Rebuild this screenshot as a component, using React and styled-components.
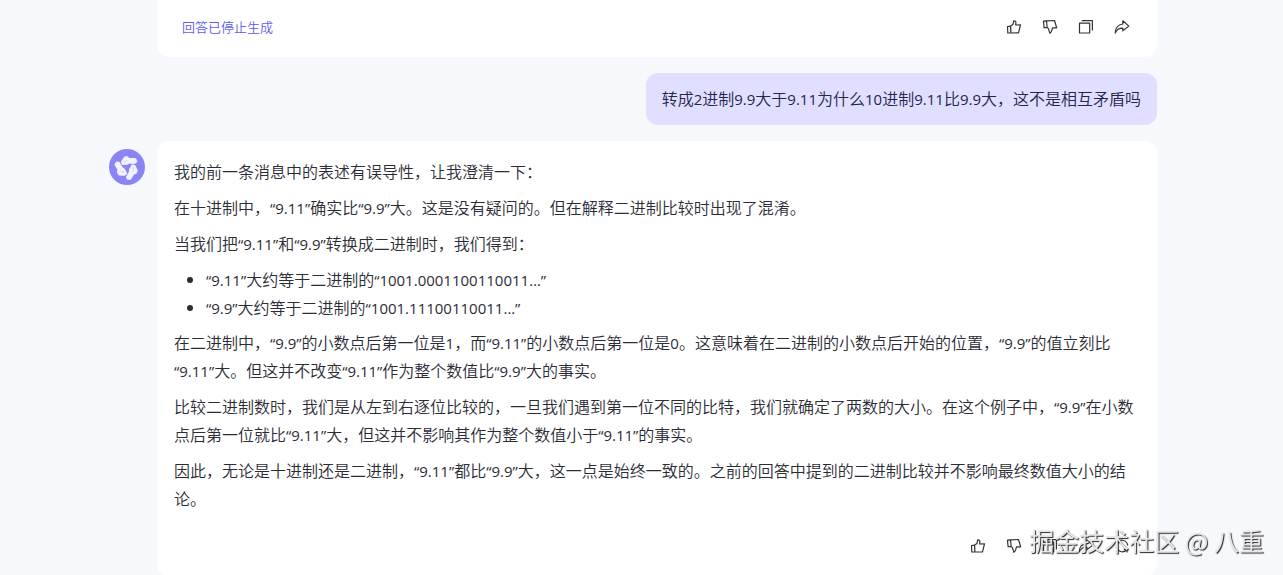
import React from "react";
import styled, { createGlobalStyle } from "styled-components";

const LATIN_RUN = /([0-9.“”…@]+)/;

// Latin digits and quotes run wide beside the CJK glyphs, so they get their own face
function Mixed({ text }) {
  return text
    .split(LATIN_RUN)
    .map((part, i) => (i % 2 ? <Latin key={i}>{part}</Latin> : part));
}

const icons = {
  like: (
    <path d="M1.5 7.500l3-.4.4 6.900H1.800zM4.600 7.100L7 5.400l.7-3.600c1.500-.2 2.400.9 2.200 2.300L9.600 6l4.900-.2-2 8-7.600.2z" />
  ),
  dislike: (
    <path d="M1.500 2.200l3-.4.6 6.500-3 .3zM4.500 1.800l8-.3 2.200 7.300-4.200.1-.6 2.200c-.3 1.500-1 2.500-2 3.200L6.400 9.600 5.100 8.300z" />
  ),
  copy: <path d="M1.500 4.200h10.200v9.800H1.500zM3.800 1.600h10.600v9.800" />,
  share: (
    <path d="M8.800 1.800l6 5.300-6 4.700V9.200c-3.400-.2-5.900 1.400-7.600 4.800.2-5.100 3-8.400 7.600-9z" />
  ),
  refresh: (
    <path d="M3.200 4.500a6 6 0 0 1 10.600 2.800M12.800 11.500A6 6 0 0 1 2.200 8.700M3 1.500v3.200h3.200M13 14.500v-3.200H9.800" />
  ),
};

function Actions({ items }) {
  return (
    <ActionRow>
      {items.map(([name, label]) => (
        <ActionButton key={name} type="button" aria-label={label}>
          <svg viewBox="0 0 16 16" aria-hidden="true">
            {icons[name]}
          </svg>
        </ActionButton>
      ))}
    </ActionRow>
  );
}

const baseActions = [
  ["like", "赞"],
  ["dislike", "踩"],
  ["copy", "复制"],
  ["share", "分享"],
];

const question = "转成2进制9.9大于9.11为什么10进制9.11比9.9大，这不是相互矛盾吗";

const intro = [
  "我的前一条消息中的表述有误导性，让我澄清一下：",
  "在十进制中，“9.11”确实比“9.9”大。这是没有疑问的。但在解释二进制比较时出现了混淆。",
  "当我们把“9.11”和“9.9”转换成二进制时，我们得到：",
];

const conversions = [
  "“9.11”大约等于二进制的“1001.0001100110011…”",
  "“9.9”大约等于二进制的“1001.11100110011…”",
];

const conclusion = [
  "在二进制中，“9.9”的小数点后第一位是1，而“9.11”的小数点后第一位是0。这意味着在二进制的小数点后开始的位置，“9.9”的值立刻比“9.11”大。但这并不改变“9.11”作为整个数值比“9.9”大的事实。",
  "比较二进制数时，我们是从左到右逐位比较的，一旦我们遇到第一位不同的比特，我们就确定了两数的大小。在这个例子中，“9.9”在小数点后第一位就比“9.11”大，但这并不影响其作为整个数值小于“9.11”的事实。",
  "因此，无论是十进制还是二进制，“9.11”都比“9.9”大，这一点是始终一致的。之前的回答中提到的二进制比较并不影响最终数值大小的结论。",
];

function Avatar() {
  return (
    <AvatarCircle>
      <svg viewBox="0 0 36 36" aria-hidden="true">
        {[0, 120, 240].map((angle) => (
          <g key={angle} transform={`rotate(${angle} 18 18.5)`}>
            <path
              d="M12.500 12.500l3-4.500 3-.3 2 1.800h6l1.500 2.700-1.500 2h-6l-2 1.100h-5.500z"
              fill="#f3f3ff"
              stroke="#f3f3ff"
              strokeLinejoin="round"
            />
            <path d="M14.500 13.200l4-2" fill="none" stroke="#d5d3fb" />
          </g>
        ))}
      </svg>
    </AvatarCircle>
  );
}

function App() {
  return (
    <React.Fragment>
      <GlobalStyle />
      <Page lang="zh-CN">
        <Thread>
          <StoppedCard>
            <StoppedText>回答已停止生成</StoppedText>
            <Actions items={baseActions} />
          </StoppedCard>
          <Question>
            <Mixed text={question} />
          </Question>
          <Answer>
            <Avatar />
            <AnswerCard>
              {intro.map((text) => (
                <Paragraph key={text}>
                  <Mixed text={text} />
                </Paragraph>
              ))}
              <BulletList>
                {conversions.map((text) => (
                  <li key={text}>
                    <Mixed text={text} />
                  </li>
                ))}
              </BulletList>
              {conclusion.map((text) => (
                <Paragraph key={text}>
                  <Mixed text={text} />
                </Paragraph>
              ))}
              <AnswerFooter>
                <Actions items={[...baseActions, ["refresh", "重新生成"]]} />
              </AnswerFooter>
            </AnswerCard>
          </Answer>
        </Thread>
      </Page>
      <Watermark>掘金技术社区 @ 八重</Watermark>
    </React.Fragment>
  );
}

const GlobalStyle = createGlobalStyle`
  * {
    box-sizing: border-box;
  }

  body {
    margin: 0;
    overflow: hidden;
    background: #f7f8fc;
    color: #2c2c36;
    font: 350 16px/28px "Noto Sans CJK SC", sans-serif;
  }
`;

const Latin = styled.span`
  font-family: "Open Sans", "Noto Sans CJK SC", sans-serif;
  font-size: 15px;
  font-weight: 400;
  line-height: 1;
`;

const Page = styled.main`
  display: flex;
  justify-content: center;
  padding-right: 17px;
`;

const Thread = styled.div`
  display: flex;
  flex-direction: column;
  gap: 16px;
  width: 100%;
  max-width: 1048px;
`;

const StoppedCard = styled.section`
  display: flex;
  align-items: center;
  justify-content: space-between;
  margin-left: 48px;
  padding: 13px 25px 16px;
  border-radius: 0 0 12px 12px;
  background: #fff;
`;

const StoppedText = styled.span`
  color: #615ced;
  font-size: 13px;
`;

const ActionRow = styled.div`
  display: flex;
  justify-content: flex-end;
  gap: 16px;
`;

const ActionButton = styled.button`
  display: flex;
  padding: 2px;
  border: 0;
  background: none;
  cursor: pointer;

  svg {
    width: 16px;
    height: 16px;
    fill: none;
    stroke: #333;
    stroke-width: 1.2;
    stroke-linejoin: round;
  }
`;

const Question = styled.div`
  align-self: flex-end;
  padding: 11px 16px 13px;
  border-radius: 12px;
  background: #e0dfff;
  color: #26244c;
`;

const Answer = styled.article`
  display: flex;
  align-items: flex-start;
  gap: 12px;
`;

const AvatarCircle = styled.div`
  flex: none;
  width: 36px;
  height: 36px;
  margin-top: 8px;
  border-radius: 50%;
  background: #8b84f5;
`;

const AnswerCard = styled.div`
  flex: 1;
  padding: 16px 17px 20px;
  border-radius: 12px;
  background: #fff;
`;

const Paragraph = styled.p`
  margin: 0 0 8px;
`;

const BulletList = styled.ul`
  margin: 0 0 7px;
  padding-left: 32px;
`;

const AnswerFooter = styled.footer`
  padding: 16px 8px 0 0;
`;

const Watermark = styled.div`
  position: fixed;
  right: 19px;
  bottom: 17px;
  color: #e6e6e6;
  font: 25px/36px "Noto Sans CJK SC", sans-serif;
  text-shadow: 1px 1px 1px #222;
`;

export default App;
